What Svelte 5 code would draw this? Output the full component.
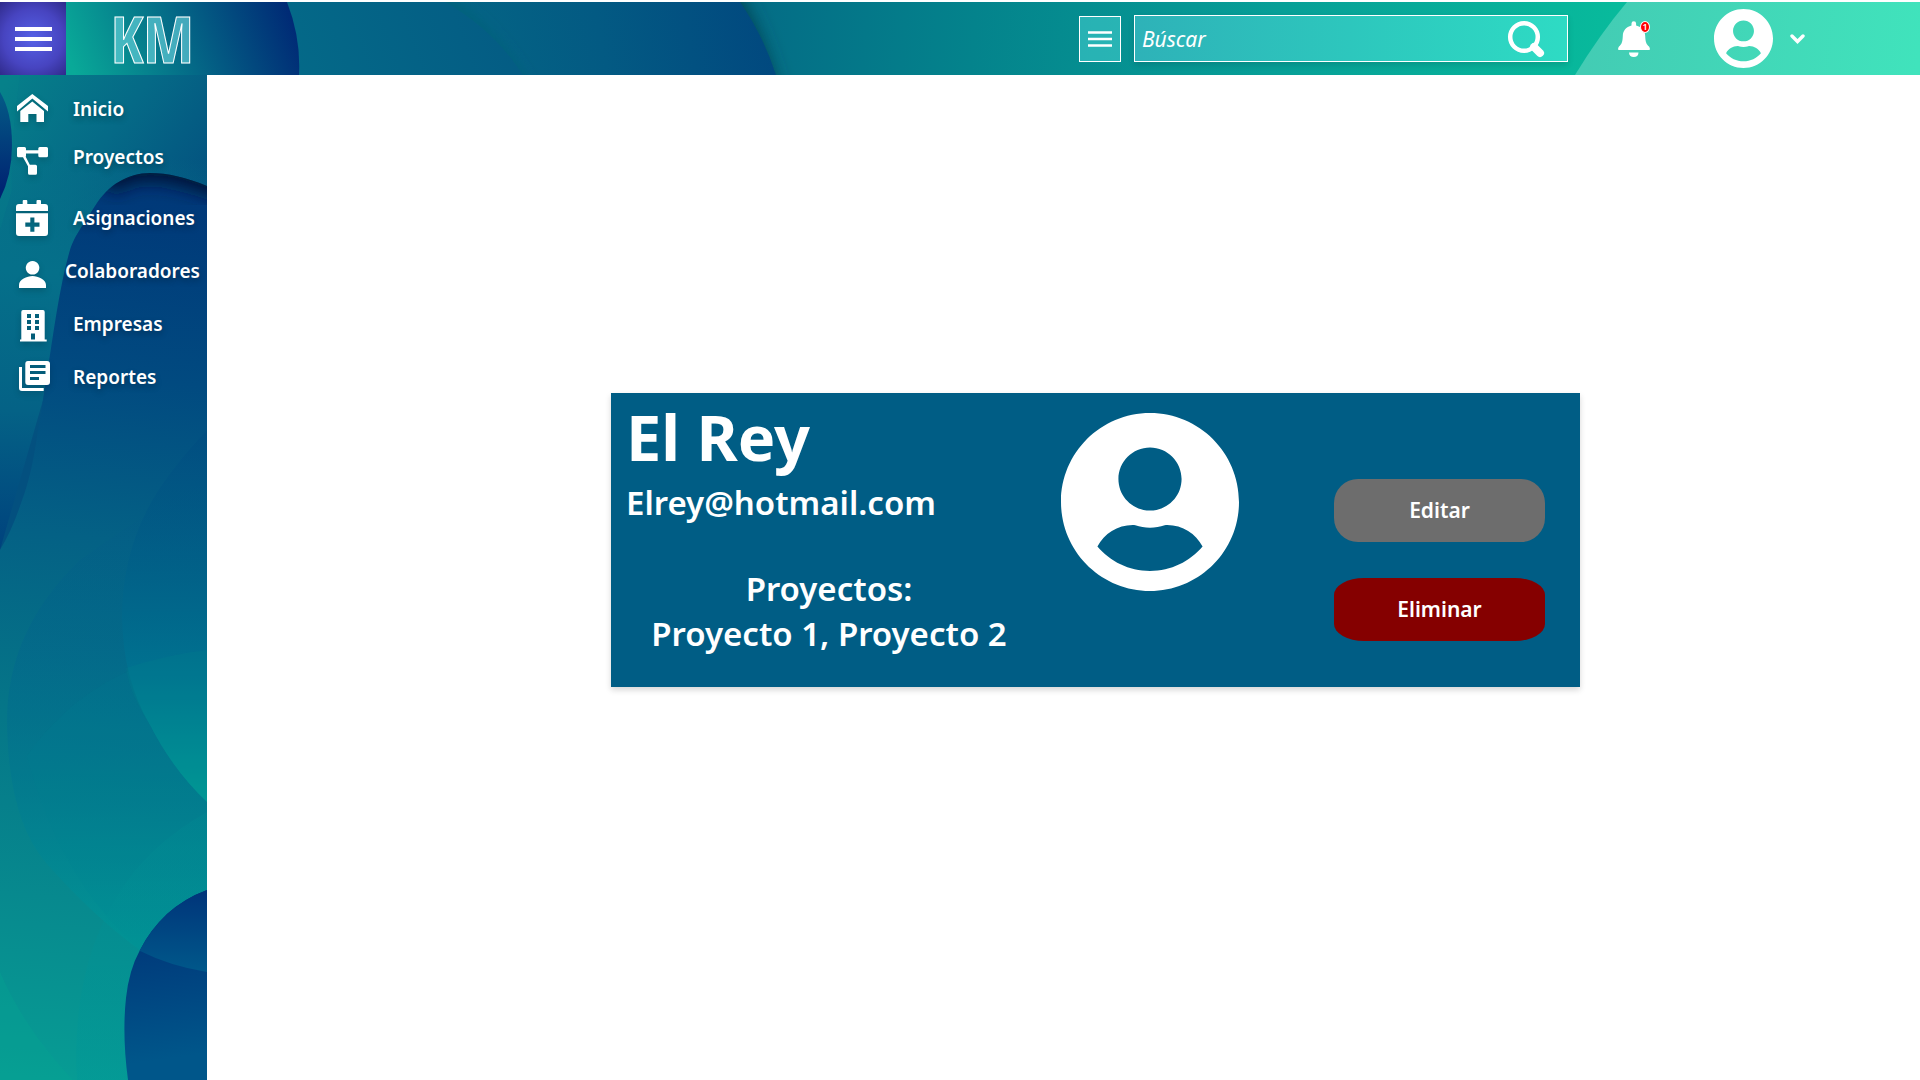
<script>
  const userIcon =
    'M248 8C111 8 0 119 0 256s111 248 248 248 248-111 248-248S385 8 248 8zm0 96c48.6 0 88 39.4 88 88s-39.4 88-88 88-88-39.4-88-88 39.4-88 88-88zm0 344c-58.7 0-111.3-26.6-146.5-68.2 18.8-35.4 55.6-59.8 98.5-59.8 2.4 0 4.8.4 7.1 1.1 13 4.2 26.6 6.9 40.9 6.9 14.3 0 28-2.7 40.9-6.9 2.3-.7 4.7-1.1 7.1-1.1 42.9 0 79.7 24.4 98.5 59.8C359.3 421.4 306.7 448 248 448z';

  const groups = [
    [
      {
        label: 'Inicio',
        path: 'M32.3 9L48 21V26.500L32.300 13.500L17 26.500V21zM32.300 16.500L44 26V37H36.500V29H28.300V37H20.300V26z'
      },
      {
        label: 'Proyectos',
        path: 'M18.500 14H24.500Q26 14 26 15.500V17.200H38.300V15.500Q38.300 14 39.800 14H46.500Q48 14 48 15.500V22.800Q48 24.300 46.500 24.300H39.800Q38.300 24.300 38.300 22.800V20.400H26V22.800Q26 23.500 25.700 23.800L29.800 31.700H35.500Q37 31.700 37 33.200V40.200Q37 41.700 35.500 41.700H29.500Q28 41.700 28 40.200V33.200L23 24.300H18.500Q17 24.300 17 22.800V15.500Q17 14 18.500 14z'
      }
    ],
    [
      {
        label: 'Asignaciones',
        path: 'M22.700 10V7Q22.700 6 23.700 6H26.300Q27.300 6 27.300 7V10H36.500V7Q36.500 6 37.500 6H40Q41 6 41 7V10H45Q48 10 48 13V17H16V13Q16 10 19 10zM16 19.300H48V39Q48 42 45 42H19Q16 42 16 39zM30.300 23.600V28.600H25.300V32.700H30.300V37.800H34.400V32.700H39.500V28.600H34.400V23.600z'
      },
      {
        label: 'Colaboradores',
        wide: true,
        path: 'M32.500 14a6.800 6.800 0 1 0 .1 0zM19 41V38C19 32.500 27 29 32.500 29S46 32.500 46 38V41z'
      },
      {
        label: 'Empresas',
        path: 'M23 10H43Q44.700 10 44.700 12V39.500H46.700V41.500H20V39.500H21.300V12Q21.300 10 23 10zM27 14V18H31V14zM35 14V18H39V14zM27 20V24H31V20zM35 20V24H39V20zM27 26V30H31V26zM35 26V30H39V26zM31 33.500V39.500H35V33.500z'
      },
      {
        label: 'Reportes',
        path: 'M28 8H47Q50 8 50 11V29Q50 32 47 32H28Q25.300 32 25.300 29V11Q25.300 8 28 8zM30 12V15H45.500V12zM30 18V21H45.500V18zM30 24V27H39V24zM19 14H22V35H43.700V38H22Q19 38 19 35z'
      }
    ]
  ];
</script>

<div class="app">
  <header>
    <svg class="art" viewBox="0 0 1920 73" preserveAspectRatio="xMinYMin slice" aria-hidden="true">
      <defs>
        <linearGradient id="hBase" gradientUnits="userSpaceOnUse" x1="760" y1="0" x2="1620" y2="73">
          <stop offset="0" stop-color="#046d86" />
          <stop offset=".25" stop-color="#04838c" />
          <stop offset=".6" stop-color="#079f97" />
          <stop offset="1" stop-color="#08bb9c" />
        </linearGradient>
        <linearGradient id="hMid" gradientUnits="userSpaceOnUse" x1="460" y1="60" x2="770" y2="0">
          <stop offset="0" stop-color="#046585" />
          <stop offset=".45" stop-color="#035a83" />
          <stop offset="1" stop-color="#01487f" />
        </linearGradient>
        <linearGradient id="hSoft" gradientUnits="userSpaceOnUse" x1="300" y1="73" x2="500" y2="0">
          <stop offset="0" stop-color="#046988" />
          <stop offset="1" stop-color="#045c84" />
        </linearGradient>
        <linearGradient id="hLeft" gradientUnits="userSpaceOnUse" x1="78" y1="80" x2="290" y2="0">
          <stop offset="0" stop-color="#09a998" />
          <stop offset=".5" stop-color="#046987" />
          <stop offset="1" stop-color="#002875" />
        </linearGradient>
        <linearGradient id="hRight" gradientUnits="userSpaceOnUse" x1="1590" y1="0" x2="1920" y2="40">
          <stop offset="0" stop-color="#43ccb4" />
          <stop offset="1" stop-color="#40e3bc" />
        </linearGradient>
        <filter id="blurWide" x="-30%" y="-60%" width="160%" height="220%"><feGaussianBlur stdDeviation="9" /></filter>
        <filter id="blurSlim" x="-30%" y="-60%" width="160%" height="220%"><feGaussianBlur stdDeviation="6" /></filter>
      </defs>
      <rect width="1920" height="73" fill="url(#hBase)" />
      <path d="M600 -60H700Q765 10 786 130H600z" fill="#04404f" filter="url(#blurWide)" />
      <path d="M300 0H740Q763 33 776 73H300z" fill="url(#hMid)" />
      <path d="M420 -20Q500 30 532 100" fill="none" stroke="#04607a" stroke-width="10" filter="url(#blurSlim)" />
      <path d="M280 0H445Q494 28 523 73H280z" fill="url(#hSoft)" />
      <path d="M0 0H287Q301 36 299 73H0z" fill="url(#hLeft)" />
      <path d="M1920 0H1627Q1600 32 1575 73H1920z" fill="url(#hRight)" />
    </svg>

    <button class="menu" aria-label="Menú">
      <svg width="38" height="26" viewBox="0 0 38 26"><path d="M1 3H38M1 13H38M1 23H38" stroke="#fff" stroke-width="4" /></svg>
    </button>
    <a class="logo" href="#inicio">KM</a>

    <button class="filter" aria-label="Filtros">
      <svg width="24" height="18" viewBox="0 0 24 18"><path d="M0 2.500H24M0 9H24M0 15.500H24" stroke="#fff" stroke-width="2.500" /></svg>
    </button>
    <form class="search" onsubmit={(e) => e.preventDefault()}>
      <input type="text" aria-label="Búscar" placeholder="Búscar" />
      <button type="submit" aria-label="Enviar búsqueda">
        <svg width="38" height="38" viewBox="0 0 38 38">
          <circle cx="17" cy="17" r="13.800" fill="none" stroke="#fff" stroke-width="4.500" />
          <path d="M27 27L33 33" stroke="#fff" stroke-width="8" stroke-linecap="round" />
        </svg>
      </button>
    </form>
    <button class="bell" aria-label="Notificaciones">
      <svg width="32" height="36" viewBox="0 0 32 36">
        <path d="M13.500 2.500a2.300 2.300 0 0 1 4.600 0V4.600C24 6 27 10 27.200 15C27.400 21 28.500 23.500 31 25.500Q32.500 27.500 31.500 29H.5Q-.5 27.500 1 25.500C3.500 23.500 4.600 21 4.800 15C5 10 8 6 13.500 4.600zM11 31.500H20.500C20.500 34.500 18.500 36 15.800 36S11 34.500 11 31.500z" fill="#fff" />
      </svg>
      <span class="badge">1</span>
    </button>
    <button class="account" aria-label="Cuenta">
      <svg width="59" height="59" viewBox="0 8 496 496"><path d={userIcon} fill="#fff" /></svg>
      <svg width="15" height="10" viewBox="0 0 15 10"><path d="M2 2L7.500 7.500L13 2" fill="none" stroke="#fff" stroke-width="3.400" stroke-linecap="round" /></svg>
    </button>
  </header>

  <aside>
    <svg class="art" viewBox="0 0 207 1005" preserveAspectRatio="xMinYMin slice" aria-hidden="true">
      <defs>
        <linearGradient id="sTop" gradientUnits="userSpaceOnUse" x1="10" y1="75" x2="200" y2="210">
          <stop offset="0" stop-color="#067f8a" />
          <stop offset=".5" stop-color="#056a87" />
          <stop offset="1" stop-color="#03507f" />
        </linearGradient>
        <linearGradient id="sLeft" gradientUnits="userSpaceOnUse" x1="20" y1="150" x2="0" y2="550">
          <stop offset="0" stop-color="#06748a" stop-opacity="0" />
          <stop offset=".3" stop-color="#05708a" />
          <stop offset=".65" stop-color="#046286" />
          <stop offset="1" stop-color="#00427d" />
        </linearGradient>
        <linearGradient id="sDot" gradientUnits="userSpaceOnUse" x1="0" y1="85" x2="0" y2="190">
          <stop offset="0" stop-color="#045f88" />
          <stop offset="1" stop-color="#002472" />
        </linearGradient>
        <linearGradient id="sWave" gradientUnits="userSpaceOnUse" x1="150" y1="180" x2="60" y2="1080">
          <stop offset="0" stop-color="#003778" />
          <stop offset=".22" stop-color="#014a80" />
          <stop offset=".4" stop-color="#046185" />
          <stop offset=".6" stop-color="#057688" />
          <stop offset=".8" stop-color="#07898e" />
          <stop offset="1" stop-color="#079c94" />
        </linearGradient>
        <linearGradient id="sA" gradientUnits="userSpaceOnUse" x1="0" y1="480" x2="0" y2="970">
          <stop offset="0" stop-color="#00508a" stop-opacity="0" />
          <stop offset=".35" stop-color="#006090" stop-opacity=".3" />
          <stop offset=".6" stop-color="#007590" stop-opacity=".5" />
          <stop offset="1" stop-color="#009c98" stop-opacity=".75" />
        </linearGradient>
        <linearGradient id="sB" gradientUnits="userSpaceOnUse" x1="0" y1="435" x2="0" y2="800">
          <stop offset="0" stop-color="#004a80" stop-opacity=".4" />
          <stop offset=".35" stop-color="#005f88" stop-opacity=".7" />
          <stop offset=".65" stop-color="#007290" />
          <stop offset="1" stop-color="#009896" />
        </linearGradient>
        <linearGradient id="sD" gradientUnits="userSpaceOnUse" x1="0" y1="812" x2="0" y2="1080">
          <stop offset="0" stop-color="#008a92" stop-opacity=".3" />
          <stop offset="1" stop-color="#009898" stop-opacity=".4" />
        </linearGradient>
        <linearGradient id="sBlob" gradientUnits="userSpaceOnUse" x1="0" y1="940" x2="20" y2="1080">
          <stop offset="0" stop-color="#003478" />
          <stop offset="1" stop-color="#00568a" />
        </linearGradient>
        <linearGradient id="sBlobTop" gradientUnits="userSpaceOnUse" x1="0" y1="890" x2="0" y2="972">
          <stop offset="0" stop-color="#00347a" />
          <stop offset="1" stop-color="#00588a" />
        </linearGradient>
        <path id="wave" d="M207 186C185 177 168 173 150 173C128 173 108 185 95 206C80 230 75 235 70 250C58 290 50 360 43 400C35 445 34 470 20 506Q12 530 0 550V1080H207z" />
        <clipPath id="waveClip"><use href="#wave" /></clipPath>
        <path id="blob" d="M207 890Q185 898 167 914Q150 930 140 950Q129 970 126 998Q122 1035 128 1080H207z" />
        <clipPath id="blobClip"><use href="#blob" /></clipPath>
        <filter id="sBlur" x="-30%" y="-60%" width="160%" height="220%"><feGaussianBlur stdDeviation="9" /></filter>
      </defs>
      <g transform="translate(0 -75)">
        <rect width="207" height="1005" y="75" fill="url(#sTop)" />
        <path d="M0 75H207V186L95 206Q75 235 70 250L43 400L0 550z" fill="url(#sLeft)" />
        <path d="M0 75H20Q10 150 12 190L0 230z" fill="#0a8a8a" opacity=".15" />
        <path d="M0 92Q12 112 12 145Q12 175 0 199z" fill="url(#sDot)" />
        <use href="#wave" fill="url(#sWave)" />
        <g clip-path="url(#waveClip)">
          <path d="M105 184C116 168 130 165 150 165C172 165 190 170 245 190" fill="none" stroke="#001235" stroke-width="32" filter="url(#sBlur)" />
          <path d="M207 478Q150 510 80 560Q7 630 7 721Q8 820 47 864Q95 918 140 950Q170 965 207 972z" fill="url(#sA)" />
          <path d="M207 650Q90 665 27 756Q60 880 140 950Q170 965 207 972z" fill="#008090" opacity=".12" />
          <path d="M207 812Q155 842 128 880Q70 960 77 1080H207z" fill="url(#sD)" />
          <path d="M0 972Q25 1030 73 1080H0z" fill="#08a692" opacity=".3" />
          <path d="M207 430Q165 475 147 510Q122 560 122 617Q123 680 150 725Q173 770 207 802z" fill="url(#sB)" />
          <path d="M207 650Q165 655 126 668Q130 695 150 725Q173 770 207 802z" fill="#009090" opacity=".15" />
          <use href="#blob" fill="url(#sBlob)" />
          <path clip-path="url(#blobClip)" d="M120 880H207V972Q170 966 140 951L120 940z" fill="url(#sBlobTop)" />
        </g>
      </g>
    </svg>

    <nav aria-label="Principal">
      {#each groups as group}
        <ul>
          {#each group as item}
            <li>
              <a href="#{item.label.toLowerCase()}" class:wide={item.wide}>
                <svg width="56" height="48" viewBox="0 0 56 48" aria-hidden="true"><path d={item.path} fill="#fff" fill-rule="evenodd" /></svg>
                <span>{item.label}</span>
              </a>
            </li>
          {/each}
        </ul>
      {/each}
    </nav>
  </aside>

  <main>
    <article class="card">
      <div class="info">
        <h1>El Rey</h1>
        <p class="mail">Elrey@hotmail.com</p>
        <div class="projects">
          <h2>Proyectos:</h2>
          <p>Proyecto 1, Proyecto 2</p>
        </div>
      </div>
      <svg class="avatar" viewBox="0 8 496 496" role="img" aria-label="Foto de perfil"><path d={userIcon} fill="#fff" /></svg>
      <div class="actions">
        <button class="edit">Editar</button>
        <button class="delete">Eliminar</button>
      </div>
    </article>
  </main>
</div>

<style>
  :global(body) {
    background: #fff;
    font-family: 'Noto Sans', 'Open Sans', sans-serif;
  }
  .app {
    display: grid;
    grid-template-columns: 207px 1fr;
    grid-template-rows: 73px 1fr;
    box-sizing: border-box;
    min-height: 100vh;
    padding-top: 2px;
  }
  button {
    border: 0;
    padding: 0;
    background: none;
    color: #fff;
    font: inherit;
    cursor: pointer;
  }
  svg {
    display: block;
    flex: none;
  }
  .art {
    position: absolute;
    inset: 0;
    z-index: -1;
    width: 100%;
    height: 100%;
  }

  header {
    grid-column: 1 / -1;
    position: relative;
    z-index: 0;
    display: flex;
    align-items: center;
    padding-right: 115px;
  }
  .menu {
    display: grid;
    place-items: center;
    width: 66px;
    height: 100%;
    background: radial-gradient(circle at 50% 50%, #5661e6 0, #4744c0 60%, #2f2a8a 100%);
  }
  .logo {
    margin: 0 auto 0 45px;
    color: rgba(110, 215, 225, 0.6);
    font: 64px/72px 'Open Sans Condensed', 'Liberation Sans Narrow', sans-serif;
    text-decoration: none;
    -webkit-text-stroke: 1px #fff;
  }
  .filter {
    display: grid;
    place-items: center;
    box-sizing: border-box;
    width: 42px;
    height: 46px;
    border: 1px solid #fff;
    background: rgba(75, 215, 215, 0.5);
  }
  .search {
    display: flex;
    align-items: center;
    box-sizing: border-box;
    flex: 0 1 434px;
    min-width: 0;
    height: 47px;
    margin-left: 13px;
    padding: 0 22px 0 7px;
    border: 1px solid #fff;
    background: linear-gradient(90deg, #2eb2b8, #2dc7bd 50%, #2edbc4);
    box-shadow: 0 3px 6px rgba(0, 0, 0, 0.12);
  }
  .search input {
    flex: 1;
    min-width: 0;
    border: 0;
    padding: 0;
    background: none;
    outline: none;
    color: #fff;
    font: italic 21px/32px 'Noto Sans', 'Open Sans', sans-serif;
  }
  .search input::placeholder {
    color: #fff;
    opacity: 1;
  }
  .bell {
    position: relative;
    margin-left: 50px;
  }
  .badge {
    position: absolute;
    top: 0;
    right: 0;
    width: 8px;
    height: 10px;
    border: 1px solid #fff;
    border-radius: 50%;
    background: #f00;
    font-size: 9px;
    font-weight: 600;
    line-height: 10px;
    text-align: center;
  }
  .account {
    display: flex;
    align-items: center;
    gap: 17px;
    margin-left: 64px;
  }

  aside {
    position: relative;
    z-index: 0;
    overflow: hidden;
  }
  nav {
    display: grid;
    gap: 13px;
    padding-top: 10px;
  }
  ul {
    display: grid;
    margin: 0;
    padding: 0;
    list-style: none;
  }
  ul + ul {
    row-gap: 5px;
  }
  nav a {
    display: flex;
    align-items: center;
    gap: 17px;
    color: #fff;
    font-size: 19px;
    font-weight: 600;
    line-height: 48px;
    text-decoration: none;
    text-shadow: 0 3px 6px rgba(0, 0, 0, 0.3);
  }
  nav a.wide {
    gap: 9px;
  }
  nav svg {
    filter: drop-shadow(0 3px 3px rgba(0, 0, 0, 0.16));
  }

  main {
    padding: 318px 340px 40px 404px;
  }
  .card {
    display: flex;
    align-items: flex-start;
    padding: 8px 35px 31px 15px;
    background: #005d85;
    box-shadow: 0 3px 6px rgba(0, 0, 0, 0.16);
    color: #fff;
  }
  .info {
    flex: 0 1 406px;
  }
  h1,
  h2,
  p {
    margin: 0;
  }
  h1 {
    font-size: 63px;
    font-weight: 700;
    line-height: 72px;
  }
  h2,
  p {
    font-size: 33px;
    font-weight: 600;
    line-height: 45px;
    white-space: nowrap;
  }
  .mail {
    margin-top: 7px;
  }
  .projects {
    margin-top: 41px;
    text-align: center;
  }
  .avatar {
    width: 178px;
    height: 178px;
    margin: 12px 0 0 29px;
  }
  .actions {
    display: grid;
    gap: 36px;
    width: 211px;
    margin: 78px 0 0 auto;
  }
  .actions button {
    font-size: 21px;
    font-weight: 600;
    line-height: 63px;
  }
  .edit {
    border-radius: 24px;
    background: #6d6d6d;
  }
  .delete {
    border-radius: 30px / 17px;
    background: #850000;
  }
</style>
